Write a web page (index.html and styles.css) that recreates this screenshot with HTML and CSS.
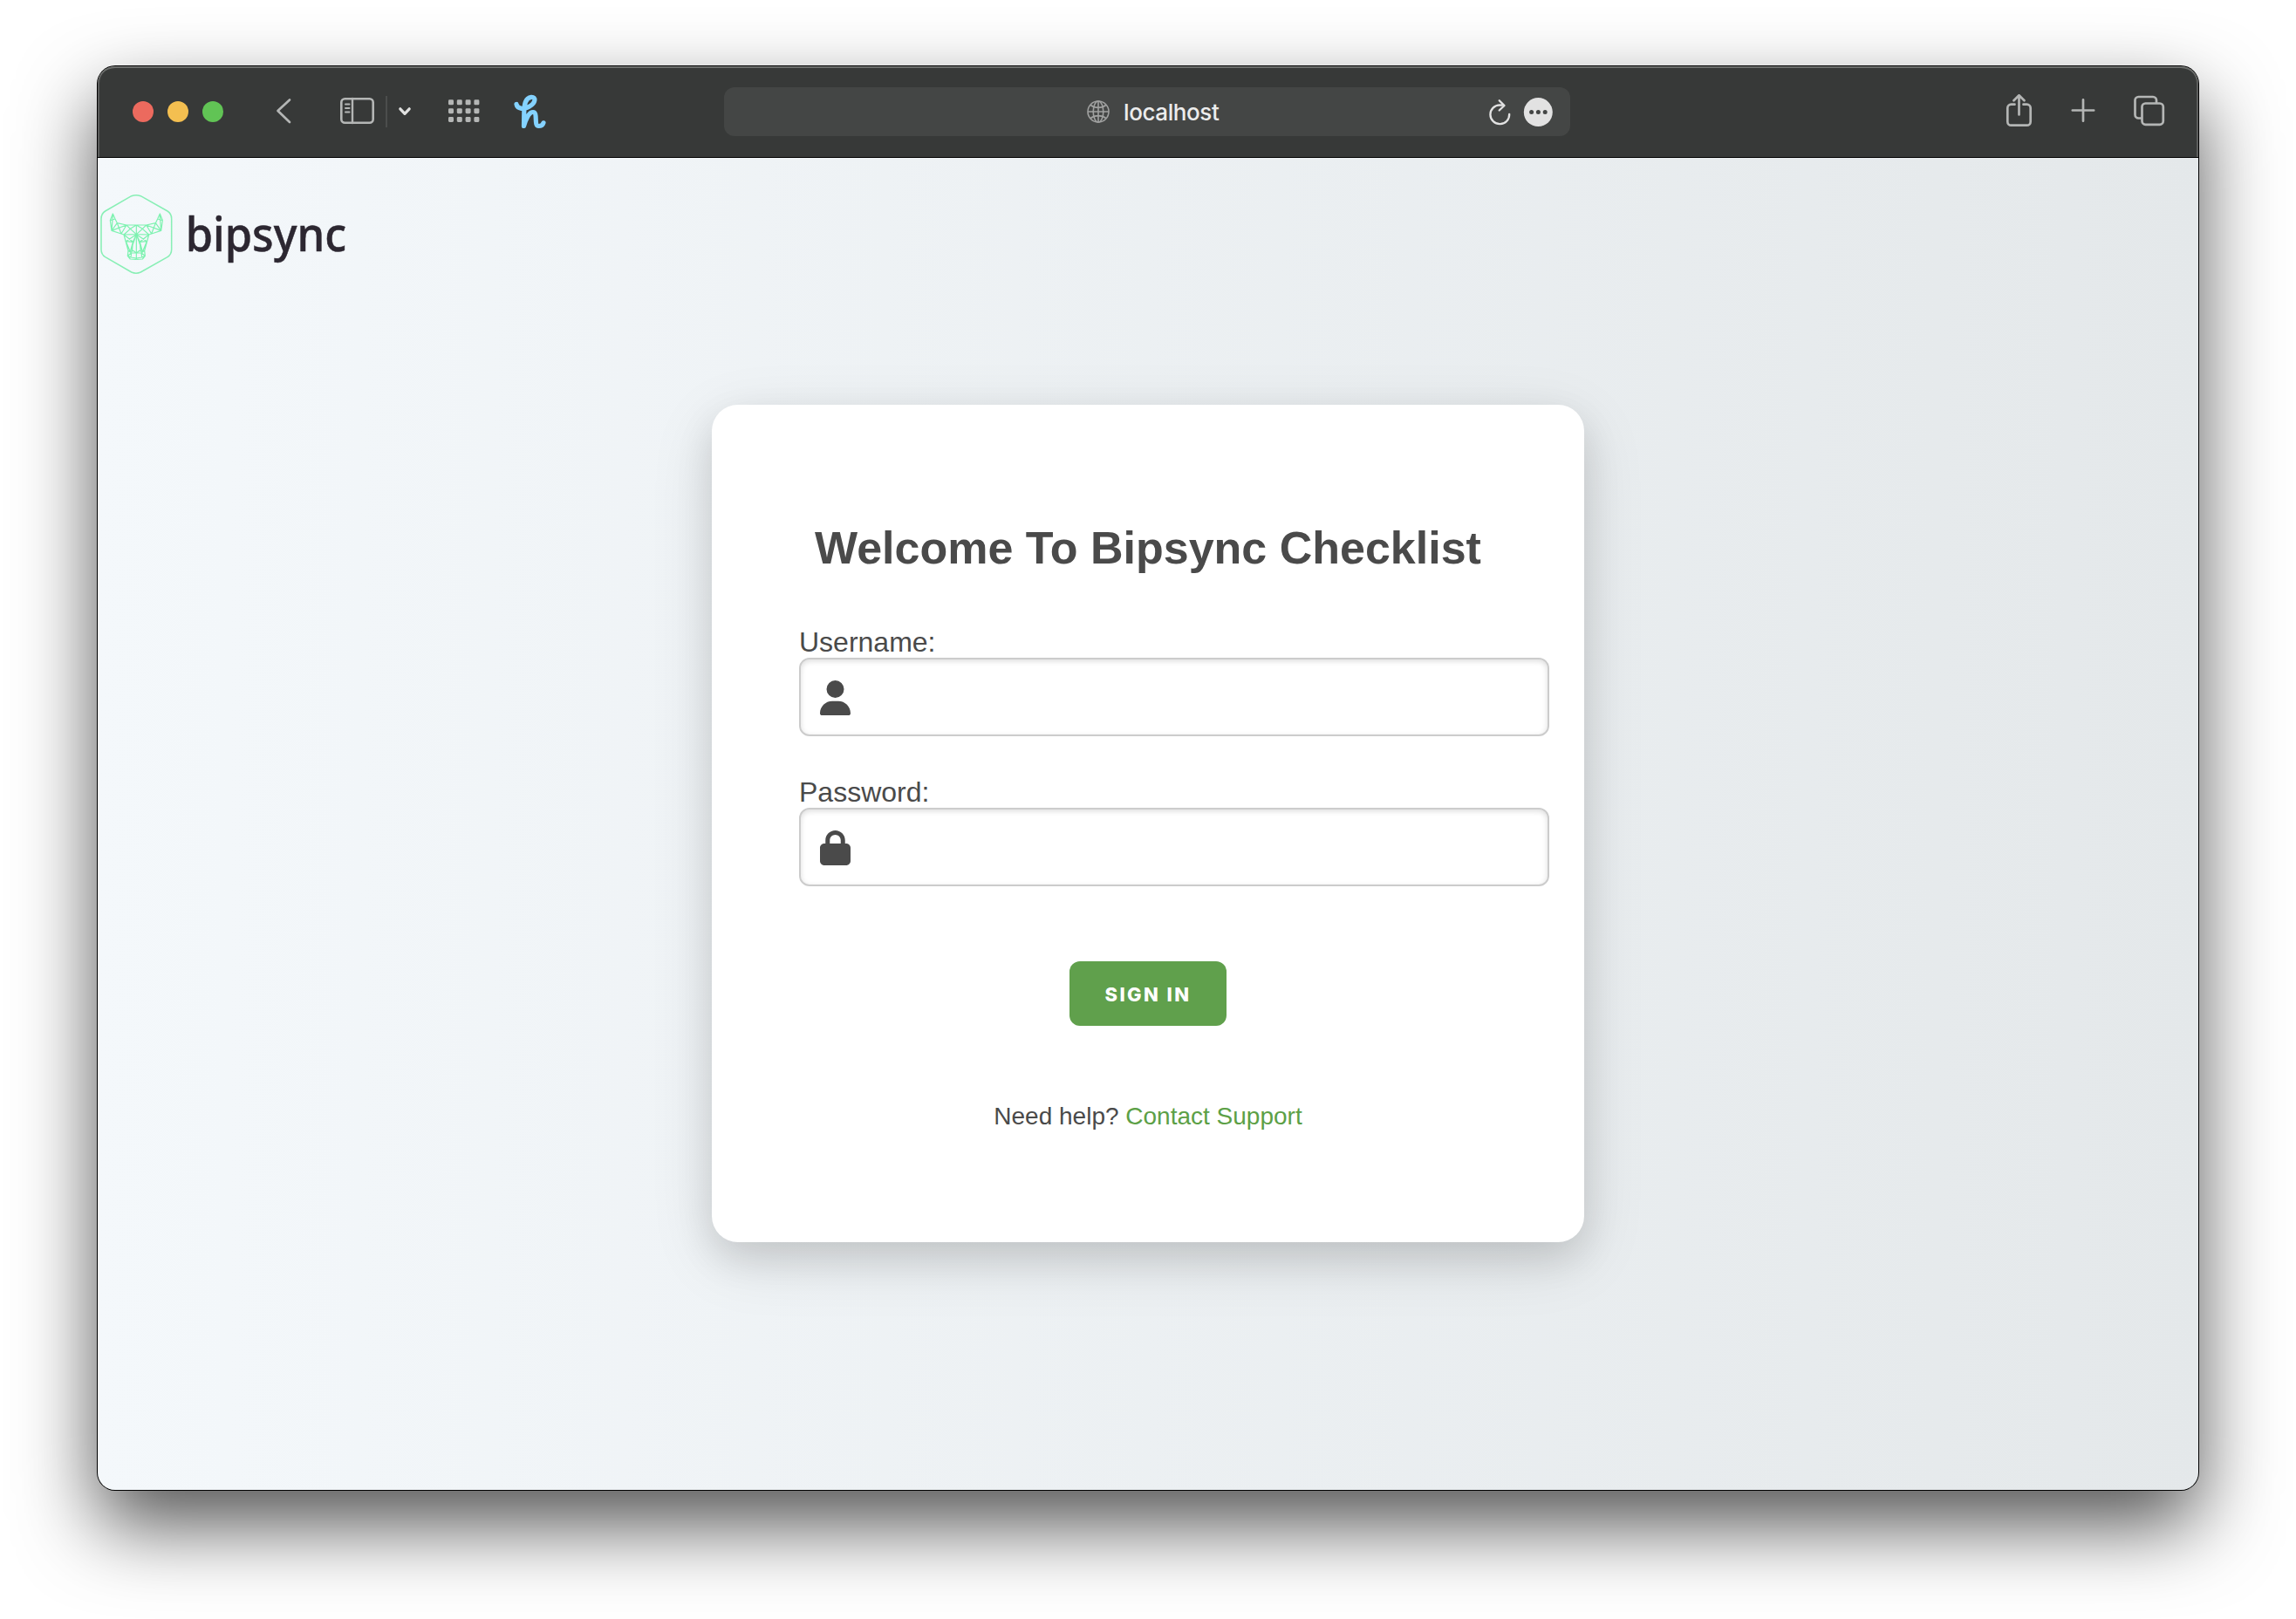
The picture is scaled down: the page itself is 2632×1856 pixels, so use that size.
FILE: index.html
```
<!DOCTYPE html>
<html lang="en">
<head>
<meta charset="utf-8">
<title>Bipsync Checklist</title>
<link rel="stylesheet" href="styles.css">
</head>
<body>
<div class="window">
  <header class="toolbar">
    <div class="tools-left">
      <div class="lights"><span class="light close"></span><span class="light minimise"></span><span class="light expand"></span></div>
      <svg class="icon back" width="20" height="40" viewBox="315 108 20 40"><path d="M332 114.500 318.500 127 332 140"/></svg>
      <svg class="icon sidebar" width="40" height="40" viewBox="390 108 40 40"><rect x="391.300" y="113.300" width="36.400" height="27.400" rx="4" stroke-width="2.600"/><path stroke-width="2.400" d="M404 113v28"/><path stroke-width="2" d="M396 119.500h4.500M396 124h4.500M396 128.500h4.500"/></svg>
      <span class="divider"></span>
      <svg class="icon caret" width="16" height="40" viewBox="456 108 16 40"><path d="M458.800 124.800 464 130.400 469.200 124.800"/></svg>
      <svg class="icon apps" width="40" height="40" viewBox="512 108 40 40"><g id="dots"><rect x="514" y="114.300" width="6" height="6" rx="1.400"/><rect x="523.800" y="114.300" width="6" height="6" rx="1.400"/><rect x="533.600" y="114.300" width="6" height="6" rx="1.400"/><rect x="543.400" y="114.300" width="6" height="6" rx="1.400"/></g><use href="#dots" y="9.900"/><use href="#dots" y="19.700"/></svg>
      <svg class="icon honey" width="40" height="40" viewBox="588 108 40 40"><path d="M592 119.500C593 125 601 126 607 122C614 118 615 111 609 111.300C602 112 601 120 600.800 128L600.500 144.500C602 139 606 128.500 611 128.500C617 128.500 611.500 144.500 617.500 144.500C620.500 144.500 622.500 142.500 623 140.800"/></svg>
    </div>
    <div class="address">
      <div class="location">
        <svg class="globe" width="26" height="26" viewBox="0 0 26 26"><circle cx="13" cy="13" r="12"/><ellipse cx="13" cy="13" rx="5.800" ry="12"/><path d="M13 1v24M1 13h24M4.200 5.500C9 9.300 17 9.300 21.800 5.500M4.200 20.500C9 16.700 17 16.700 21.800 20.500"/></svg>
        <span class="host">localhost</span>
      </div>
      <svg class="page-actions" width="76" height="40" viewBox="1704 108 76 40"><path class="reload" d="M1730.200 130.800A10.900 10.900 0 1 1 1719.300 120.400L1724 120.800M1718.700 115.200 1724.500 121 1718.700 126.500"/><circle class="more" cx="1763.300" cy="128.600" r="16.500"/><path class="more-dots" d="M1755.600 128.600h.01M1763.400 128.600h.01M1771.200 128.600h.01"/></svg>
    </div>
    <div class="tools-right">
      <svg class="icon" width="40" height="40" viewBox="2295 107 40 40"><path d="M2309.500 118.700H2305.500a4.200 4.200 0 0 0-4.200 4.200V138.500a4.200 4.200 0 0 0 4.200 4.200H2323.500a4.200 4.200 0 0 0 4.200-4.200V122.900a4.200 4.200 0 0 0-4.200-4.200H2319.500M2314.500 130.500V108.500M2308.500 114.300 2314.500 108.300 2320.500 114.300"/></svg>
      <svg class="icon new-tab" width="40" height="40" viewBox="2367.500 108 40 40"><path d="M2387.500 114.300v24.400M2375.300 126.500h24.400"/></svg>
      <svg class="icon" width="40" height="40" viewBox="2444 108 40 40"><rect x="2455.500" y="118.500" width="24.300" height="24.300" rx="4"/><path d="M2454.500 135.500H2451.500a4 4 0 0 1-4-4V115a4 4 0 0 1 4-4H2468a4 4 0 0 1 4 4V117.500"/></svg>
    </div>
  </header>
  <main class="page">
    <svg class="logo" width="400" height="134" viewBox="36 6 1200 402">
      <path class="hex" d="M152 74Q168 68 184 74L276 126Q290 135 290 152V258Q290 275 276 284L184 336Q168 343 152 336L62 284Q48 275 48 258V152Q48 135 62 126Z"/>
      <g class="bull">
        <g id="half">
          <path d="M88 135 79 158 84 193 103 167 96 153 88 135 87 156 79 158M87 156 96 153M87 156 84 193M103 167 135 174 169 174M103 167 117 204 84 193M135 174 117 204 126 207 169 206M135 174 84 193M135 174 148 187 126 207M148 187 169 174M148 187 169 206"/>
          <path d="M126 207 141 262 139 280 148 291 169 292M169 206 133 230 157 232 169 206 148 266M126 207 157 232M133 230 148 266 157 232M157 232 154 266M141 262 152 270H169M148 266 158 262 169 270M139 280 152 270 150 285 169 288M150 285 139 280"/>
        </g>
        <use href="#half" transform="translate(338 0) scale(-1 1)"/>
        <path d="M169 174V292"/>
      </g>
      <text x="338" y="265" textLength="553" lengthAdjust="spacingAndGlyphs">bipsync</text>
    </svg>
    <form class="card">
      <h1>Welcome To Bipsync Checklist</h1>
      <label for="username">Username:</label>
      <div class="field">
        <svg width="35" height="40" viewBox="0 0 448 512"><path d="M224 256A128 128 0 1 0 224 0a128 128 0 1 0 0 256zm-45.700 48C79.800 304 0 383.800 0 482.300C0 498.700 13.300 512 29.700 512H418.300c16.400 0 29.700-13.300 29.700-29.700C448 383.800 368.200 304 269.700 304H178.300z"/></svg>
        <input id="username" type="text">
      </div>
      <label for="password">Password:</label>
      <div class="field">
        <svg width="35" height="40" viewBox="0 0 448 512"><path d="M144 144v48H304V144c0-44.200-35.800-80-80-80s-80 35.800-80 80zM80 192V144C80 64.500 144.500 0 224 0s144 64.500 144 144v48h16c35.300 0 64 28.700 64 64V448c0 35.300-28.700 64-64 64H64c-35.300 0-64-28.700-64-64V256c0-35.300 28.700-64 64-64H80z"/></svg>
        <input id="password" type="password">
      </div>
      <button type="button">SIGN IN</button>
      <p class="help">Need help? <a href="#">Contact Support</a></p>
    </form>
  </main>
</div>
</body>
</html>
```
FILE: styles.css
```
* { box-sizing: border-box; }

body {
  margin: 0;
  padding: 76px 112px 148px;
  background: #fff;
  font-family: "Liberation Sans", Arial, sans-serif;
  color: #4a4a4a;
}

.window {
  display: flex;
  flex-direction: column;
  width: 2408px;
  height: 1632px;
  border-radius: 20px;
  background: #373938;
  box-shadow: 0 0 0 1px #000, 0 40px 90px rgba(0, 0, 0, .68);
}

/* Browser toolbar */
.toolbar {
  display: grid;
  grid-template-columns: 718px 970px 1fr;
  align-items: center;
  height: 105px;
  border-bottom: 1px solid #000;
  border-radius: 20px 20px 0 0;
  box-shadow: inset 0 2px 0 #6c6e6c, inset 2px 0 0 #5c5d5c, inset -2px 0 0 #5c5d5c;
}

.tools-left,
.tools-right,
.lights,
.address,
.location { display: flex; align-items: center; }

.tools-left { padding-left: 40px; }
.tools-right { justify-content: flex-end; padding-right: 36px; }
.new-tab { margin: 0 36px 0 33px; }
.lights { gap: 16px; }
.light { width: 24px; height: 24px; border-radius: 50%; }
.close { background: #ec6a5e; }
.minimise { background: #f4bf50; }
.expand { background: #61c455; }

.icon {
  flex: none;
  fill: none;
  stroke: #b4b6b5;
  stroke-width: 2.700;
  stroke-linecap: round;
  stroke-linejoin: round;
}
.back { margin-left: 59px; }
.sidebar { margin-left: 55px; }
.divider { width: 2px; height: 36px; margin: 0 12px; background: #4b4d4c; }
.caret { stroke: #e0e1e0; stroke-width: 3.200; }
.apps { margin-left: 40px; fill: #b4b6b5; stroke: none; }
.honey { margin-left: 36px; stroke: #84d2ff; stroke-width: 5.200; }

.address {
  height: 56px;
  border-radius: 12px;
  background: #444645;
}
.location {
  flex: 1;
  gap: 16px;
  padding-left: 416px;
  font: 500 26px/32px Inter, sans-serif;
  letter-spacing: -.4px;
  color: #ececec;
}
.globe { fill: none; stroke: #a0a1a0; stroke-width: 1.600; }
.host { padding-top: 2px; }
.page-actions { margin-right: 20px; fill: none; stroke-linecap: round; stroke-linejoin: round; }
.reload { stroke: #e2e2e2; stroke-width: 2.300; }
.more { fill: #e2e2e2; }
.more-dots { stroke: #444645; stroke-width: 5; }

/* Login page */
.page {
  display: flex;
  flex: 1;
  flex-direction: column;
  border-radius: 0 0 20px 20px;
  background: linear-gradient(90deg, #f4f8fb, #e4e8ea);
}
.logo { margin-top: 21px; }
.logo text {
  font-family: "Noto Sans", sans-serif;
  font-size: 164px;
  font-weight: 500;
  fill: #2c2731;
  stroke: #2c2731;
  stroke-width: 1.500;
}
.hex { fill: none; stroke: #88efb5; stroke-width: 4.600; }
.bull { fill: none; stroke: #7df2b0; stroke-width: 3.600; stroke-linejoin: round; }

.card {
  display: flex;
  flex-direction: column;
  align-self: center;
  width: 1000px;
  height: 960px;
  margin-top: 128px;
  padding: 134px 100px 0;
  border-radius: 30px;
  background: #fff;
  box-shadow: 0 20px 76px rgba(0, 0, 0, .11), 0 18px 44px rgba(0, 0, 0, .11);
}
h1 {
  margin: 0 0 60px;
  font-size: 52px;
  line-height: 60px;
  text-align: center;
  white-space: nowrap;
}
label { font-size: 32px; line-height: 36px; }
.field {
  display: flex;
  align-items: center;
  gap: 16px;
  width: 860px;
  height: 90px;
  margin-bottom: 46px;
  padding: 2px 22px 0;
  border: 2px solid #ccc;
  border-radius: 12px;
  box-shadow: inset 0 2px 6px #ddd;
}
.field svg { fill: #4a4a4a; }
input {
  flex: 1;
  height: 60px;
  border: 0;
  outline: 0;
  background: none;
  font: inherit;
  font-size: 32px;
}
button {
  align-self: center;
  width: 180px;
  height: 74px;
  margin-top: 40px;
  padding: 2px 0 0;
  border: 0;
  border-radius: 12px;
  background: #60a04c;
  color: #fff;
  font: 800 22px/28px Inter, sans-serif;
  letter-spacing: 2.400px;
}
.help {
  margin: 88px 0 0;
  font-size: 28px;
  line-height: 32px;
  text-align: center;
}
a { color: #5ca046; text-decoration: none; }
```
